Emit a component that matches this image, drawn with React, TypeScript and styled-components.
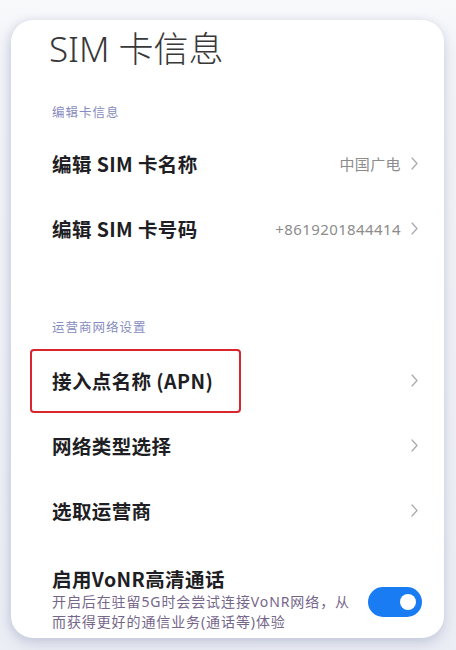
import styled, { createGlobalStyle } from 'styled-components';

const GlobalStyle = createGlobalStyle`
	html, body {
		margin: 0;
		padding: 0;
		background: #eef0f6;
		font-family: "Noto Sans", "Noto Sans CJK SC", sans-serif;
	}
`;

const Page = styled.div`
	width: 456px;
	height: 650px;
	box-sizing: border-box;
	padding: 20px 12px 12px 11px;
	background: linear-gradient(#f8f9fb 0, #f3f4f8 60px, #eceef5 100%);
	overflow: hidden;
`;

const Card = styled.div`
	height: 618px;
	box-sizing: border-box;
	padding: 7px 22px 0 41px;
	background: #ffffff;
	border-radius: 22px;
	box-shadow: 0 6px 14px rgba(120, 130, 170, 0.28), -2px 0 8px rgba(140, 150, 190, 0.18);
`;

const Title = styled.h1`
	margin: 0 0 0 -3px;
	font-size: 35px;
	line-height: 44px;
	font-weight: 300;
	color: #383838;
`;

const SectionLabel = styled.div<{ $top: number; $bottom: number }>`
	padding: ${(p) => p.$top}px 0 ${(p) => p.$bottom}px;
	font-size: 12.5px;
	line-height: 20px;
	letter-spacing: 1px;
	color: #878cc0;
`;

const Row = styled.div`
	position: relative;
	display: flex;
	height: 65px;
	align-items: center;
	justify-content: space-between;
`;

const Label = styled.div`
	font-family: "Noto Sans CJK SC", sans-serif;
	font-size: 19.5px;
	font-weight: 700;
	letter-spacing: 0.4px;
	color: #1e1e24;
`;

const RowRight = styled.div`
	display: flex;
	align-items: center;
	gap: 10px;
	margin-right: 4px;
`;

const Value = styled.span`
	font-size: 15px;
	color: #8c8c8c;
	letter-spacing: 0.4px;
`;

const Highlight = styled.div`
	position: absolute;
	left: -22px;
	top: 1px;
	width: 211px;
	height: 64px;
	box-sizing: border-box;
	border: 2.5px solid #d8262c;
	border-radius: 4px;
`;

const ToggleRow = styled.div`
	display: flex;
	align-items: center;
	justify-content: space-between;
	margin-top: 23px;
`;

const ToggleText = styled.div`
	width: 304px;
`;

const ToggleTitle = styled.div`
	font-family: "Noto Sans CJK SC", sans-serif;
	font-size: 19.5px;
	line-height: 26px;
	font-weight: 700;
	letter-spacing: 0.4px;
	color: #1e1e24;
`;

const Description = styled.div`
	font-size: 14px;
	line-height: 20px;
	letter-spacing: 0.9px;
	color: #75668a;
`;

const Switch = styled.div<{ $on: boolean }>`
	display: flex;
	align-items: center;
	justify-content: ${(p) => (p.$on ? 'flex-end' : 'flex-start')};
	width: 54px;
	height: 30px;
	box-sizing: border-box;
	padding: 0 6px;
	margin-top: 6px;
	border-radius: 15px;
	background: ${(p) => (p.$on ? '#1a7cf2' : '#d7d9e0')};
`;

const Knob = styled.div`
	width: 16px;
	height: 16px;
	border-radius: 50%;
	background: #ffffff;
`;

const Chevron = () => (
	<svg width="7" height="13" viewBox="0 0 7 13" fill="none">
		<polyline points="1,1 6,6.5 1,12" stroke="#a8a8ae" strokeWidth="1.2" strokeLinecap="round" strokeLinejoin="round" />
	</svg>
);

type Item = { label: string; value?: string; marked?: boolean };

const cardItems: Item[] = [
	{ label: '编辑 SIM 卡名称', value: '中国广电' },
	{ label: '编辑 SIM 卡号码', value: '+8619201844414' },
];

const networkItems: Item[] = [
	{ label: '接入点名称 (APN)', marked: true },
	{ label: '网络类型选择' },
	{ label: '选取运营商' },
];

const SettingRow = ({ label, value, marked }: Item) => (
	<Row>
		{marked && <Highlight />}
		<Label>{label}</Label>
		<RowRight>
			{value && <Value>{value}</Value>}
			<Chevron />
		</RowRight>
	</Row>
);

export default function App() {
	return (
		<>
			<GlobalStyle />
			<Page>
				<Card>
					<Title>SIM 卡信息</Title>
					<SectionLabel $top={32} $bottom={8}>编辑卡信息</SectionLabel>
					{cardItems.map((item) => (
						<SettingRow key={item.label} {...item} />
					))}
					<SectionLabel $top={57} $bottom={10}>运营商网络设置</SectionLabel>
					{networkItems.map((item) => (
						<SettingRow key={item.label} {...item} />
					))}
					<ToggleRow>
						<ToggleText>
							<ToggleTitle>启用VoNR高清通话</ToggleTitle>
							<Description>开启后在驻留5G时会尝试连接VoNR网络，从而获得更好的通信业务(通话等)体验</Description>
						</ToggleText>
						<Switch $on>
							<Knob />
						</Switch>
					</ToggleRow>
				</Card>
			</Page>
		</>
	);
}
